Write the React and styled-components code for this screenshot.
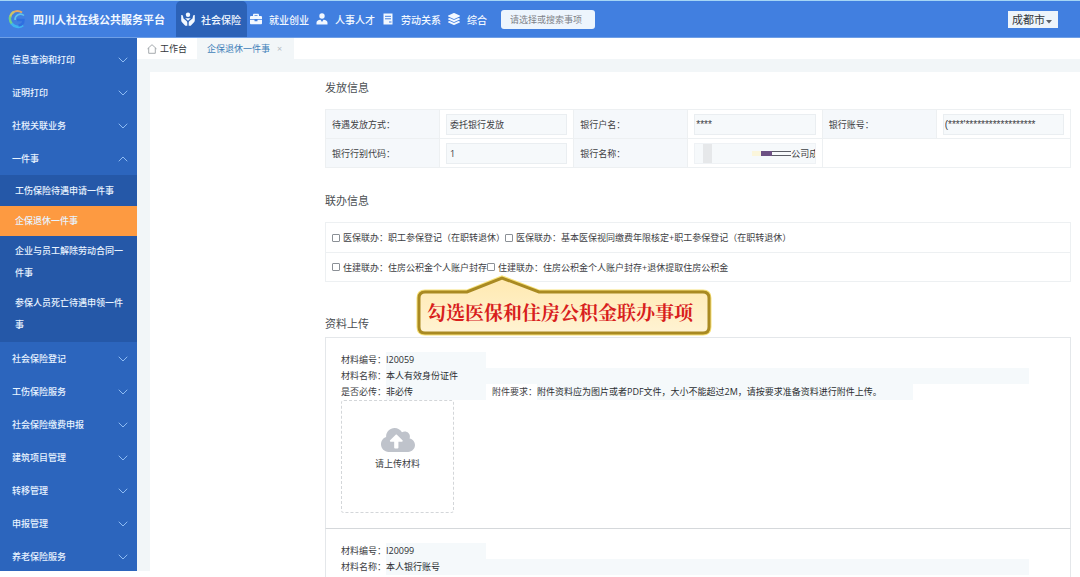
import React from 'react'
import styled, { createGlobalStyle, css } from 'styled-components'
import { FaBriefcase, FaCloudUploadAlt, FaLayerGroup } from 'react-icons/fa'
import { ChevronDown, ChevronUp } from 'lucide-react'

const GlobalStyle = createGlobalStyle`
    * {
        box-sizing: border-box;
    }

    body {
        margin: 0;
        background-color: #fff;
        color: #3d4043;
        font-family: 'Open Sans', 'Noto Sans CJK SC', sans-serif;
        font-size: 9px;
    }

    button, input, select {
        font: inherit;
        color: inherit;
    }

    a {
        color: inherit;
        text-decoration: none;
    }
`

const Shell = styled.div`
    display: flex;
    flex-direction: column;
    height: 100vh;
    padding-bottom: 6px;
    overflow: hidden;
`

const Header = styled.header`
    display: flex;
    flex: none;
    align-items: center;
    height: 38px;
    padding: 0 22px 0 8px;
    border-top: 1px solid #a5d5f5;
    border-bottom: 1px solid #6f9fe6;
    background-color: #417fe0;
    color: #f2f8ff;
`

const Brand = styled.h1`
    display: flex;
    align-items: center;
    gap: 6px;
    width: 168px;
    margin: 0;
    font-size: 11px;
    font-weight: 700;
    white-space: nowrap;
`

const Nav = styled.nav`
    display: flex;
    align-self: stretch;
    align-items: center;
    gap: 7px;
    font-size: 10px;
    font-weight: 500;
`

const NavLink = styled.a`
    display: flex;
    align-items: center;
    gap: 7px;
    white-space: nowrap;

    & svg {
        width: 12px;
        height: 12px;
    }

    ${({ $active }) => $active && css`
        gap: 6px;
        height: 100%;
        margin-right: -4px;
        padding: 0 6px 0 5px;
        border-radius: 5px 5px 0 0;
        background-color: #2c62b7;

        & svg {
            width: 14px;
            height: 14px;
        }
    `}
`

const Search = styled.input`
    width: 94px;
    height: 19px;
    margin-left: 14px;
    padding: 0 9px;
    border: none;
    border-radius: 3px;
    background-color: #edf5fd;

    &::placeholder {
        color: #7d8288;
        opacity: 1;
    }
`

const City = styled.label`
    position: relative;
    margin-left: auto;

    & select {
        display: block;
        width: 50px;
        height: 17px;
        padding: 0 4px;
        border: none;
        border-radius: 0;
        appearance: none;
        background-color: #edf4fb;
        color: #33373b;
        font-size: 11px;
        line-height: 17px;
    }

    & svg {
        position: absolute;
        right: 6px;
        bottom: 4px;
        pointer-events: none;
    }
`

const Body = styled.div`
    display: flex;
    flex: 1;
    min-height: 0;
`

const Sidebar = styled.nav`
    flex: none;
    width: 137px;
    padding-top: 5px;
    overflow: hidden;
    background-color: #2c65bd;
    color: #e8f3ff;
    font-weight: 500;
`

const MenuButton = styled.button`
    display: flex;
    align-items: center;
    justify-content: space-between;
    width: 100%;
    height: 33px;
    padding: 0 6px 0 12px;
    border: none;
    background: none;
    font-weight: 500;
    cursor: pointer;

    & svg {
        color: #8fbcf3;
    }
`

const SubMenu = styled.ul`
    margin: 0;
    padding: 1px 0 2px;
    background-color: #2558a8;
    list-style: none;
`

const SubLink = styled.a`
    display: block;
    padding: 4px 8px 4px 15px;
    background-color: ${({ $active }) => ($active ? '#fd9a41' : 'transparent')};
    line-height: 22px;
`

const Main = styled.main`
    display: flex;
    flex: 1;
    flex-direction: column;
    min-width: 0;
    background-color: #f2f6f8;
`

const TabBar = styled.div`
    display: flex;
    flex: none;
    height: 21px;
    background-color: #fff;
`

const Tab = styled.a`
    display: flex;
    align-items: center;
    gap: 3px;
    padding: 0 10px;
    background-color: ${({ $active }) => ($active ? '#f2f6f8' : '#fff')};
    color: ${({ $active }) => ($active ? '#3f7fb8' : '#33373b')};
`

const CloseButton = styled.button`
    padding: 0 2px 0 4px;
    border: none;
    background: none;
    color: #b4bbc2;
    line-height: 1;
`

const Page = styled.div`
    flex: 1;
    min-height: 0;
    margin: 13px 0 -6px 13px;
    padding: 0 9px 0 175px;
    overflow: hidden;
    background-color: #fff;
`

const Section = styled.section`
    position: relative;
    margin-bottom: ${({ $gap }) => $gap}px;
`

const SectionTitle = styled.h2`
    margin: 0;
    padding: 8px 0 ${({ $tight }) => ($tight ? 5 : 13)}px;
    color: #4b4f53;
    font-size: 11px;
    font-weight: 400;
    line-height: 16px;
`

const InfoTable = styled.table`
    width: 100%;
    border: 1px solid #edf0f2;
    border-collapse: collapse;
    table-layout: fixed;

    & th, & td {
        height: 29px;
        padding: 0 6px;
        border: 1px solid #edf0f2;
        text-align: left;
        font-weight: 400;
    }

    & th {
        width: 114px;
        background-color: #f5f8fb;
    }
`

const Field = styled.input`
    display: block;
    width: 100%;
    height: 21px;
    padding: 0 3px;
    border: 1px solid #eaeef1;
    background-color: #f6f9fb;

    ${({ $masked }) => $masked && css`
        padding-left: 1px;
        font-family: 'Liberation Sans', sans-serif;
        font-size: 10px;
    `}
`

const MaskedField = styled.div`
    display: flex;
    align-items: center;
    height: 21px;
    padding-left: 8px;
    border: 1px solid #eff2f5;
    background-color: #f6f9fb;
    overflow: hidden;

    & svg {
        flex: none;
    }

    & input {
        flex: 1;
        min-width: 0;
        padding: 0;
        border: none;
        background: none;
    }
`

const OptionList = styled.ul`
    margin: 0;
    padding: 0;
    border: 1px solid #edf0f2;
    list-style: none;

    & li {
        display: flex;
        align-items: center;
        height: 29px;
        padding: 0 6px;
    }

    & li + li {
        border-top: 1px solid #edf0f2;
    }
`

const Option = styled.label`
    display: flex;
    align-items: center;
    gap: 3px;
    white-space: nowrap;

    & input {
        width: 8px;
        height: 8px;
        margin: 0;
        border: 1px solid #8b9096;
        border-radius: 1px;
        appearance: none;
        background-color: #fff;
    }

    & input:checked {
        background-color: #417fe0;
    }
`

const Callout = styled.div`
    position: absolute;
    top: 89px;
    left: 90px;
    width: 297px;
    height: 62px;
    padding: 26px 0 0 12px;
    color: #d8201c;
    font-family: 'Liberation Serif', 'Noto Serif CJK SC', 'Noto Sans CJK SC', serif;
    font-size: 19px;
    font-weight: 700;
    line-height: 28px;
    white-space: nowrap;
    z-index: 1;

    & svg {
        position: absolute;
        inset: 0;
        z-index: -1;
    }
`

const Material = styled.article`
    padding: 14px 15px 15px;
    border: 1px solid #e4e7ea;
    border-bottom-color: #d5d8db;

    & + & {
        border-top: none;
    }
`

const MaterialLine = styled.div`
    display: flex;
    height: 16px;
    line-height: 16px;
    white-space: nowrap;
`

const Value = styled.span`
    width: ${({ $width }) => $width};
    margin-right: 6px;
    background-color: #f5f9fb;
    color: #2b2e31;
`

const UploadButton = styled.button`
    display: flex;
    flex-direction: column;
    align-items: center;
    justify-content: center;
    width: 113px;
    height: 113px;
    padding: 0 0 20px;
    border: 1px dashed #d3d6d9;
    border-radius: 3px;
    background-color: #fff;
    cursor: pointer;

    & svg {
        color: #bfc3cb;
    }
`

const menu = [
    { label: '信息查询和打印' },
    { label: '证明打印' },
    { label: '社税关联业务' },
    {
        label: '一件事',
        children: [
            '工伤保险待遇申请一件事',
            '企保退休一件事',
            '企业与员工解除劳动合同一件事',
            '参保人员死亡待遇申领一件事'
        ]
    },
    { label: '社会保险登记' },
    { label: '工伤保险服务' },
    { label: '社会保险缴费申报' },
    { label: '建筑项目管理' },
    { label: '转移管理' },
    { label: '申报管理' },
    { label: '养老保险服务' }
]

const options = [
    ['医保联办：职工参保登记（在职转退休）', '医保联办：基本医保视同缴费年限核定+职工参保登记（在职转退休）'],
    ['住建联办：住房公积金个人账户封存', '住建联办：住房公积金个人账户封存+退休提取住房公积金']
]

const materials = [
    {
        code: 'I20059',
        name: '本人有效身份证件',
        required: '非必传',
        note: '附件资料应为图片或者PDF文件，大小不能超过2M，请按要求准备资料进行附件上传。'
    },
    { code: 'I20099', name: '本人银行账号' }
]

const Logo = () => (
    <svg width="19" height="20" viewBox="0 0 19 20" fill="none">
        <path d="M14 3.5A8 8 0 0 0 5 3.400" stroke="#e8a860" strokeWidth="2" />
        <path d="M6 2.800A8 8 0 0 0 2 9" stroke="#c9c46a" strokeWidth="2.2" />
        <path d="M2.2 7.500A8 8 0 0 0 4 15" stroke="#6fd08b" strokeWidth="2.4" />
        <path d="M3.6 14.4A8 8 0 0 0 15 16.200" stroke="#3fb4f0" strokeWidth="2.6" />
        <path d="M16 6.500A5.500 5.500 0 0 0 7 11" stroke="#5fc3ee" strokeWidth="1.6" />
        <path d="M9 11h6.500c0 3-2 5-5 5.500" stroke="#2f6fe0" strokeWidth="2.4" />
    </svg>
)

const CareIcon = () => (
    <svg viewBox="0 0 14 14" fill="currentColor">
        <circle cx="7" cy="2.700" r="2.200" />
        <path d="M0.200 3.200c1-.5 1.600 0 1.800 1l.5 2.200 3 2.700c.7.700.8 1.300.8 2.200v2.500H4.300L1 10.300C.4 9.600.2 9 .2 8z" />
        <path d="M13.800 3.200c-1-.5-1.600 0-1.800 1l-.5 2.200-3 2.700c-.7.700-.8 1.300-.8 2.200v2.500h2L13 10.300c.6-.7.8-1.300.8-2.300z" />
        <path d="M4.200 6.200h5.600L7 8.700z" />
    </svg>
)

const PersonIcon = () => (
    <svg viewBox="0 0 12 12" fill="currentColor">
        <circle cx="6" cy="3" r="2.700" />
        <path d="M0.500 11.500V9.700C.5 8 2 7 4.500 6.700L6 9l1.500-2.300C10 7 11.500 8 11.500 9.700v1.800z" />
    </svg>
)

const FormIcon = () => (
    <svg viewBox="0 0 12 12" fill="none">
        <path d="M1.500 0.500h9v11h-9z" fill="currentColor" />
        <path d="M3 3.300h6M3 5.800h6M7 9h2.500" stroke="#417fe0" strokeWidth="1" />
    </svg>
)

const HomeIcon = () => (
    <svg width="10" height="10" viewBox="0 0 10 10" fill="none" stroke="#8f959b">
        <path d="M0.500 4.800L5 0.700l4.500 4.100M1.700 4v5.300h6.600V4" strokeWidth="0.800" />
    </svg>
)

const App = () => (
    <>
        <GlobalStyle />
        <Shell>
            <Header>
                <Brand><Logo />四川人社在线公共服务平台</Brand>
                <Nav>
                    <NavLink href="#insurance" $active><CareIcon />社会保险</NavLink>
                    <NavLink href="#jobs"><FaBriefcase />就业创业</NavLink>
                    <NavLink href="#talent"><PersonIcon />人事人才</NavLink>
                    <NavLink href="#labour"><FormIcon />劳动关系</NavLink>
                    <NavLink href="#general"><FaLayerGroup />综合</NavLink>
                </Nav>
                <Search aria-label="搜索事项" placeholder="请选择或搜索事项" />
                <City>
                    <select aria-label="城市">
                        <option>成都市</option>
                    </select>
                    <svg width="6" height="4" viewBox="0 0 6 4"><path d="M0 0h6L3 3.500z" fill="#5a5f66" /></svg>
                </City>
            </Header>
            <Body>
                <Sidebar>
                    {menu.map(({ label, children }) => (
                        <React.Fragment key={label}>
                            <MenuButton>
                                {label}
                                {children ? <ChevronUp size={16} strokeWidth={1.5} /> : <ChevronDown size={16} strokeWidth={1.5} />}
                            </MenuButton>
                            {children && (
                                <SubMenu>
                                    {children.map(child => (
                                        <li key={child}>
                                            <SubLink href="#item" $active={child === '企保退休一件事'}>{child}</SubLink>
                                        </li>
                                    ))}
                                </SubMenu>
                            )}
                        </React.Fragment>
                    ))}
                </Sidebar>
                <Main>
                    <TabBar>
                        <Tab href="#desk"><HomeIcon />工作台</Tab>
                        <Tab href="#retire" $active>企保退休一件事 <CloseButton aria-label="关闭">×</CloseButton></Tab>
                    </TabBar>
                    <Page>
                        <Section $gap={17}>
                            <SectionTitle>发放信息</SectionTitle>
                            <InfoTable>
                                <colgroup>
                                    <col width="114" />
                                    <col />
                                    <col width="114" />
                                    <col />
                                    <col width="114" />
                                    <col />
                                </colgroup>
                                <tbody>
                                    <tr>
                                        <th><label htmlFor="method">待遇发放方式：</label></th>
                                        <td><Field id="method" defaultValue="委托银行发放" /></td>
                                        <th><label htmlFor="holder">银行户名：</label></th>
                                        <td><Field id="holder" $masked defaultValue="****" /></td>
                                        <th><label htmlFor="account">银行账号：</label></th>
                                        <td><Field id="account" $masked defaultValue="(****'******************" /></td>
                                    </tr>
                                    <tr>
                                        <th><label htmlFor="code">银行行别代码：</label></th>
                                        <td><Field id="code" defaultValue="1" /></td>
                                        <th><label htmlFor="bank">银行名称：</label></th>
                                        <td>
                                            <MaskedField>
                                                <svg width="88" height="19" viewBox="0 0 88 19">
                                                    <path d="M0 0h9v19H0z" fill="#e6e8ea" />
                                                    <path d="M49 7h9v5h-9z" fill="#fbf6dc" />
                                                    <path d="M69 7.500h19M69 11.500h19" stroke="#5b5d66" />
                                                    <path d="M58 7h11v5H58z" fill="#6d5183" />
                                                </svg>
                                                <input id="bank" defaultValue="公司成都" />
                                            </MaskedField>
                                        </td>
                                        <td colSpan={2} />
                                    </tr>
                                </tbody>
                            </InfoTable>
                        </Section>
                        <Section $gap={26}>
                            <SectionTitle>联办信息</SectionTitle>
                            <OptionList>
                                {options.map(row => (
                                    <li key={row[0]}>
                                        {row.map(text => (
                                            <Option key={text}><input type="checkbox" />{text}</Option>
                                        ))}
                                    </li>
                                ))}
                            </OptionList>
                            <Callout>
                                <svg width="297" height="62" viewBox="0 0 297 62">
                                    <defs>
                                        <linearGradient id="paper" x1="0" y1="0" x2="0" y2="1">
                                            <stop offset="0" stopColor="#ffe9b0" />
                                            <stop offset="1" stopColor="#fff3d3" />
                                        </linearGradient>
                                    </defs>
                                    <path
                                        d="M10 18H52L87 4L124 18H288Q294 18 294 24V53Q294 59 288 59H10Q4 59 4 53V24Q4 18 10 18Z"
                                        fill="none" stroke="#f8e27a" strokeWidth="5" />
                                    <path
                                        d="M10 18H52L87 4L124 18H288Q294 18 294 24V53Q294 59 288 59H10Q4 59 4 53V24Q4 18 10 18Z"
                                        fill="url(#paper)" stroke="#a98a22" strokeWidth="3" />
                                </svg>
                                勾选医保和住房公积金联办事项
                            </Callout>
                        </Section>
                        <Section $gap={0}>
                            <SectionTitle $tight>资料上传</SectionTitle>
                            {materials.map(({ code, name, required, note }) => (
                                <Material key={code}>
                                    <MaterialLine>材料编号：<Value $width="100px">{code}</Value></MaterialLine>
                                    <MaterialLine>材料名称：<Value $width="90%">{name}</Value></MaterialLine>
                                    {required && (
                                        <>
                                            <MaterialLine>
                                                是否必传：<Value $width="100px">{required}</Value>
                                                附件要求：<Value $width="376px">{note}</Value>
                                            </MaterialLine>
                                            <UploadButton>
                                                <FaCloudUploadAlt size={34} />
                                                请上传材料
                                            </UploadButton>
                                        </>
                                    )}
                                </Material>
                            ))}
                        </Section>
                    </Page>
                </Main>
            </Body>
        </Shell>
    </>
)

export default App
